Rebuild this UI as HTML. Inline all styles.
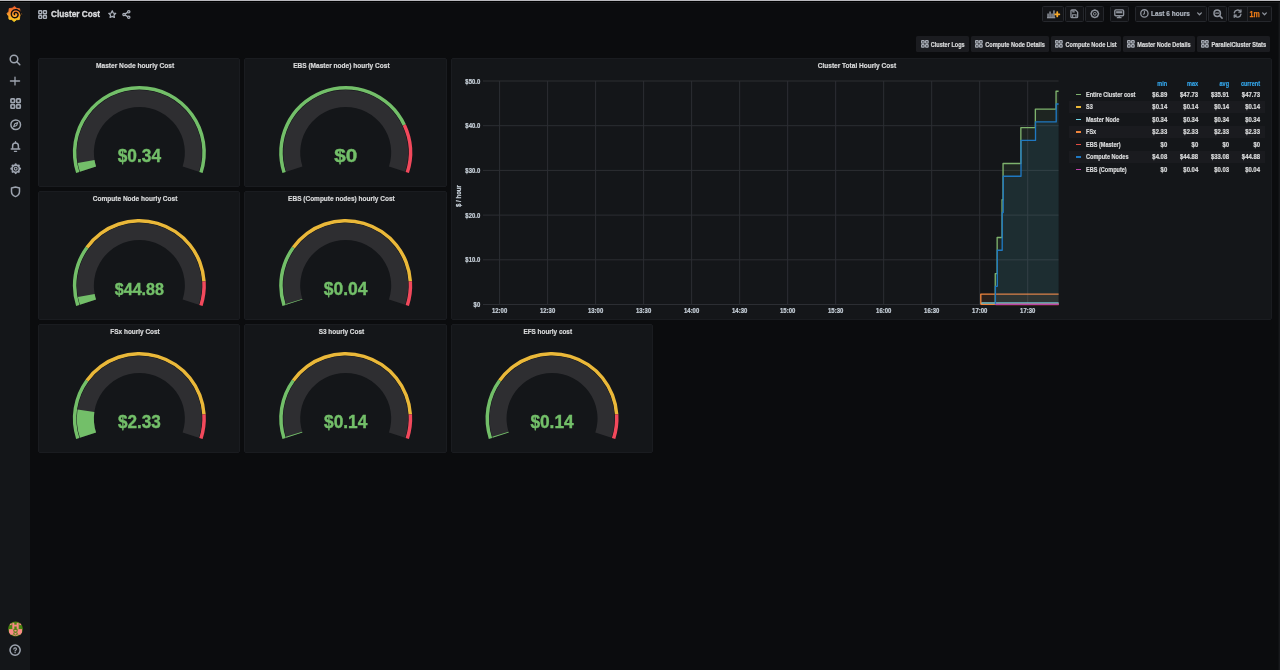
<!DOCTYPE html>
<html lang="en"><head><meta charset="utf-8"><title>Cluster Cost - Grafana</title>
<style>
html,body{margin:0;padding:0;}
body{width:1280px;height:670px;overflow:hidden;background:#0b0c0e;position:relative;font-family:"Liberation Sans",sans-serif;font-weight:700;color:#d8d9da;}
.t{position:absolute;white-space:nowrap;}
.abs{position:absolute;}
.panel{position:absolute;background:#141619;border:1px solid #1a1c20;border-radius:2px;box-sizing:border-box;}
.btn{position:absolute;background:#121316;border:1px solid #25272c;border-radius:1.5px;box-sizing:border-box;}
.lnk{position:absolute;background:#1b1c20;border-radius:1.5px;box-sizing:border-box;}
svg{position:absolute;overflow:visible;}
#root{position:absolute;left:0;top:0;width:1280px;height:670px;will-change:transform;}
</style></head><body><div id="root">

<div class="abs" style="left:0;top:0;width:1280px;height:1px;background:#b9b9bd"></div>
<div class="abs" style="left:0;top:1px;width:1280px;height:1px;background:#000"></div>
<div class="abs" style="left:0;top:2px;width:30px;height:668px;background:#141619"></div>
<div class="abs" style="left:0;top:2px;width:1280px;height:1px;background:rgba(255,255,255,0.045)"></div>
<svg style="left:0;top:0" width="1280" height="670"><rect x="1278.600" y="2" width="1.400" height="668" fill="#18191c"/></svg>
<svg style="left:0;top:0" width="30" height="30"><defs><linearGradient id="lg" gradientUnits="userSpaceOnUse" x1="0" y1="21.5" x2="0" y2="6"><stop offset="0" stop-color="#fcd21f"/><stop offset="0.45" stop-color="#f89a2c"/><stop offset="1" stop-color="#f1592a"/></linearGradient></defs><path d="M14.52 6.45L16.75 8.39L19.63 8.82L19.88 11.82L21.62 14.23L19.74 16.52L19.32 19.50L16.42 19.75L14.08 21.55L11.85 19.61L8.97 19.18L8.72 16.18L6.98 13.77L8.86 11.48L9.28 8.50L12.18 8.25Z" fill="url(#lg)" stroke="url(#lg)" stroke-width="0.9" stroke-linejoin="round"/><path d="M21.26 15.71L21.00 14.40L20.70 13.21L20.17 12.14L19.45 11.24L18.58 10.53L17.62 10.04L16.60 9.78L15.59 9.74L14.63 9.88L13.73 10.20L12.95 10.68L12.30 11.29L11.82 12.01L11.50 12.80L11.36 13.61L11.40 14.40L11.53 15.16L11.82 15.86L12.24 16.48L12.77 16.99L13.38 17.37L14.06 17.61L14.75 17.71L15.44 17.66L16.10 17.48L16.70 17.17L17.21 16.75L17.62 16.23L17.91 15.65L18.07 15.03L18.10 14.40L17.89 13.81L17.57 13.30L17.17 12.90L16.71 12.61L16.23 12.44L15.76 12.38L15.31 12.44L14.91 12.60L14.59 12.85L14.37 13.14L14.24 13.45L14.21 13.75L14.25 14.02L14.37 14.24L14.53 14.40" fill="none" stroke="#0c0d10" stroke-width="1.4" stroke-linecap="round" stroke-linejoin="round"/></svg>
<svg style="left:9.4px;top:54px" width="11.6" height="11.6" viewBox="0 0 23.2 23.2"><circle cx="10" cy="10" r="7.6" fill="none" stroke="#9da4af" stroke-width="3"/><path d="M15.600 15.600l6 6" stroke="#9da4af" stroke-width="3" stroke-linecap="round"/></svg>
<svg style="left:10.3px;top:76px" width="10" height="10" viewBox="0 0 20 20"><path d="M10 2.200v15.600" stroke="#9da4af" stroke-width="2.600" stroke-linecap="round"/><path d="M1 9.900h18" stroke="#9da4af" stroke-width="3" stroke-linecap="round"/></svg>
<svg style="left:9.9px;top:97.8px" width="11.2" height="11.2" viewBox="0 0 20 20"><g fill="none" stroke="#9da4af" stroke-width="3.0"><rect x="1.700" y="1.700" width="6.400" height="6.400" rx="1.200"/><rect x="11.900" y="1.700" width="6.400" height="6.400" rx="1.200"/><rect x="1.700" y="11.900" width="6.400" height="6.400" rx="1.200"/><rect x="11.900" y="11.900" width="6.400" height="6.400" rx="1.200"/></g></svg>
<svg style="left:9.8px;top:119.4px" width="11.4" height="11.4" viewBox="0 0 22 22"><circle cx="11" cy="11" r="9.300" fill="none" stroke="#9da4af" stroke-width="2.900"/><path d="M15 7l-2.300 5.700L7 15l2.300-5.700z" fill="none" stroke="#9da4af" stroke-width="2.200" stroke-linejoin="round"/></svg>
<svg style="left:10.2px;top:141px" width="11" height="11.6" viewBox="0 0 22 23.2"><path d="M5.200 15.500V10a5.800 5.800 0 0 1 11.600 0v5.500" fill="none" stroke="#9da4af" stroke-width="3" stroke-linejoin="round"/><path d="M2.500 16.200h17" stroke="#9da4af" stroke-width="3" stroke-linecap="round"/><path d="M8.800 20.600h4.400" stroke="#9da4af" stroke-width="2.600" stroke-linecap="round"/><path d="M11 1.500v2" stroke="#9da4af" stroke-width="2.600" stroke-linecap="round"/></svg>
<svg style="left:9.8px;top:163.1px" width="11.4" height="11.4" viewBox="0 0 22 22"><circle cx="11" cy="11" r="7" fill="none" stroke="#9da4af" stroke-width="3.200"/><circle cx="11" cy="2.600" r="2.100" fill="#9da4af" transform="rotate(0 11 11)"/><circle cx="11" cy="2.600" r="2.100" fill="#9da4af" transform="rotate(45 11 11)"/><circle cx="11" cy="2.600" r="2.100" fill="#9da4af" transform="rotate(90 11 11)"/><circle cx="11" cy="2.600" r="2.100" fill="#9da4af" transform="rotate(135 11 11)"/><circle cx="11" cy="2.600" r="2.100" fill="#9da4af" transform="rotate(180 11 11)"/><circle cx="11" cy="2.600" r="2.100" fill="#9da4af" transform="rotate(225 11 11)"/><circle cx="11" cy="2.600" r="2.100" fill="#9da4af" transform="rotate(270 11 11)"/><circle cx="11" cy="2.600" r="2.100" fill="#9da4af" transform="rotate(315 11 11)"/><circle cx="11" cy="11" r="2.700" fill="none" stroke="#9da4af" stroke-width="2.200"/></svg>
<svg style="left:10.1px;top:185.8px" width="11" height="11.6" viewBox="0 0 22 23.2"><path d="M11 2.200l8 2v6.800c0 4.800-3.200 8.400-8 10.200-4.800-1.800-8-5.400-8-10.200V4.200z" fill="none" stroke="#9da4af" stroke-width="3" stroke-linejoin="round"/></svg>
<svg style="left:0;top:0" width="30" height="670"><defs><clipPath id="avc"><circle cx="15.500" cy="629" r="7.400"/></clipPath></defs><g clip-path="url(#avc)"><rect x="7" y="620" width="17" height="18" fill="#4a8410"/><rect x="12.3" y="622.8" width="2.00" height="6.10" fill="#f98b86"/><rect x="16.7" y="622.8" width="2.00" height="6.10" fill="#f98b86"/><rect x="14.1" y="624.7" width="2.80" height="1.80" fill="#f98b86"/><rect x="9.4" y="623.2" width="2.20" height="1.90" fill="#f98b86"/><rect x="19.4" y="623.2" width="2.20" height="1.90" fill="#f98b86"/><rect x="9.0" y="629.1" width="4.50" height="5.70" fill="#f98b86"/><rect x="17.5" y="629.1" width="4.50" height="5.70" fill="#f98b86"/><rect x="13.5" y="629.8" width="4.00" height="6.20" fill="#f98b86"/><ellipse cx="15.500" cy="630.700" rx="1.700" ry="1.300" fill="none" stroke="#4a8410" stroke-width="0.900"/><ellipse cx="15.500" cy="633.800" rx="1.700" ry="1.300" fill="none" stroke="#4a8410" stroke-width="0.900"/></g></svg>
<svg style="left:9.4px;top:644.2px" width="12.2" height="12.2" viewBox="0 0 24 24"><circle cx="12" cy="12" r="10" fill="none" stroke="#9da4af" stroke-width="3"/><path d="M9.600 10a2.500 2.500 0 1 1 3.600 2.200c-.8.400-1.200.9-1.200 1.600" fill="none" stroke="#9da4af" stroke-width="2.400" stroke-linecap="round"/><circle cx="12" cy="16.800" r="1.400" fill="#9da4af"/></svg>
<svg style="left:37.9px;top:9.9px" width="9.2" height="9.2" viewBox="0 0 20 20"><g fill="none" stroke="#aab0ba" stroke-width="3.0"><rect x="1.700" y="1.700" width="6.400" height="6.400" rx="1.200"/><rect x="11.900" y="1.700" width="6.400" height="6.400" rx="1.200"/><rect x="1.700" y="11.900" width="6.400" height="6.400" rx="1.200"/><rect x="11.900" y="11.900" width="6.400" height="6.400" rx="1.200"/></g></svg>
<svg style="left:107.5px;top:10px" width="8.5" height="8.5" viewBox="0 0 20 20"><path d="M10 1.800l2.500 5.300 5.700.8-4.100 4 1 5.700-5.100-2.700-5.100 2.700 1-5.700-4.100-4 5.700-.8z" fill="none" stroke="#aab0ba" stroke-width="2.900" stroke-linejoin="round"/></svg>
<svg style="left:122px;top:10px" width="9" height="9" viewBox="0 0 20 20"><g fill="none" stroke="#aab0ba" stroke-width="2.800"><circle cx="15" cy="4" r="2.600"/><circle cx="15" cy="16" r="2.600"/><circle cx="4.500" cy="10" r="2.600"/><path d="M6.800 8.700l5.900-3.400M6.800 11.300l5.900 3.400"/></g></svg>
<div class="btn" style="left:1042.4px;top:6px;width:21.50px;height:16px"></div>
<div class="btn" style="left:1065.4px;top:6px;width:18.50px;height:16px"></div>
<div class="btn" style="left:1085.3px;top:6px;width:18.60px;height:16px"></div>
<div class="btn" style="left:1110.2px;top:6px;width:18.50px;height:16px"></div>
<div class="btn" style="left:1135.3px;top:6px;width:71.50px;height:16px"></div>
<div class="btn" style="left:1208.3px;top:6px;width:18.40px;height:16px"></div>
<div class="btn" style="left:1228.2px;top:6px;width:43.60px;height:16px"></div>
<div class="abs" style="left:1246.600px;top:6px;width:1px;height:16px;background:#25272c"></div>
<svg style="left:1046.8px;top:9.8px" width="13" height="9" viewBox="0 0 26 18"><g fill="#8e939c"><rect x="0.600" y="7" width="3" height="9"/><rect x="4.600" y="3" width="3" height="13"/><rect x="8.600" y="7" width="3" height="9"/><rect x="12.400" y="0.800" width="3" height="15.200"/><rect x="0" y="14.200" width="16.500" height="2.400"/></g><path d="M20.500 4.500v8.400M16.300 8.700h8.400" stroke="#f7a82a" stroke-width="3.600" stroke-linecap="round"/></svg>
<svg style="left:1070.4px;top:9.3px" width="8.6" height="9.6" viewBox="0 0 18 20"><path d="M4 2h7.500L16 6.500V16a2 2 0 0 1-2 2H4a2 2 0 0 1-2-2V4a2 2 0 0 1 2-2z" fill="none" stroke="#8e939c" stroke-width="2.800" stroke-linejoin="round"/><path d="M5.500 18v-6h7v6" fill="none" stroke="#8e939c" stroke-width="2.400"/><path d="M6 2.500v3.500h4" fill="none" stroke="#8e939c" stroke-width="2.200"/></svg>
<svg style="left:1089.7px;top:9.3px" width="9.6" height="9.6" viewBox="0 0 20 20"><path d="M17.90 10.00L15.59 15.59L10.00 17.90L4.41 15.59L2.10 10.00L4.41 4.41L10.00 2.10L15.59 4.41Z" fill="none" stroke="#8e939c" stroke-width="3.200" stroke-linejoin="round"/><circle cx="10" cy="10" r="2.900" fill="none" stroke="#8e939c" stroke-width="2"/></svg>
<svg style="left:1114.3px;top:9.3px" width="10.4" height="9.6" viewBox="0 0 22 20"><rect x="1.700" y="1.700" width="18.600" height="12.600" rx="2.200" fill="none" stroke="#8e939c" stroke-width="3"/><rect x="4.500" y="4.500" width="13" height="4.500" fill="#8e939c"/><path d="M7 18.300h8M11 15v3" stroke="#8e939c" stroke-width="2.600" stroke-linecap="round"/></svg>
<svg style="left:1139.6px;top:9.4px" width="8.8" height="8.8" viewBox="0 0 20 20"><circle cx="10" cy="10" r="8.300" fill="none" stroke="#8e939c" stroke-width="3"/><path d="M10 5v5.500l-2.500 1.500" fill="none" stroke="#8e939c" stroke-width="2.400" stroke-linecap="round"/></svg>
<svg style="left:1197px;top:11.6px" width="5" height="4" viewBox="0 0 10 8"><path d="M1.300 1.800l3.700 3.800 3.700-3.800" fill="none" stroke="#8e939c" stroke-width="2.500" stroke-linecap="round" stroke-linejoin="round"/></svg>
<svg style="left:1212.6px;top:9.0px" width="9.8" height="9.8" viewBox="0 0 20 20"><circle cx="8.600" cy="8.600" r="6.600" fill="none" stroke="#8e939c" stroke-width="3"/><path d="M13.800 13.800l4.800 4.800" stroke="#8e939c" stroke-width="3" stroke-linecap="round"/><path d="M5.600 8.600h6" stroke="#8e939c" stroke-width="2.600" stroke-linecap="round"/></svg>
<svg style="left:1233px;top:9.2px" width="9.2" height="9.2" viewBox="0 0 20 20"><path d="M2.800 8.500A7.400 7.400 0 0 1 16.500 6M17.200 11.500A7.400 7.400 0 0 1 3.500 14" fill="none" stroke="#8e939c" stroke-width="3" stroke-linecap="round"/><path d="M17.300 2v4.700h-4.700M2.700 18v-4.700h4.700" fill="none" stroke="#8e939c" stroke-width="2.800" stroke-linecap="round" stroke-linejoin="round"/></svg>
<svg style="left:1262.2px;top:11.6px" width="5" height="4" viewBox="0 0 10 8"><path d="M1.300 1.800l3.700 3.800 3.700-3.800" fill="none" stroke="#8e939c" stroke-width="2.500" stroke-linecap="round" stroke-linejoin="round"/></svg>
<div class="lnk" style="left:916.2px;top:36px;width:52.40px;height:16px"></div>
<svg style="left:920.5px;top:40.0px" width="7.8" height="7.8" viewBox="0 0 20 20"><g fill="none" stroke="#a9aeb7" stroke-width="3.2"><rect x="1.700" y="1.700" width="6.400" height="6.400" rx="1.200"/><rect x="11.900" y="1.700" width="6.400" height="6.400" rx="1.200"/><rect x="1.700" y="11.900" width="6.400" height="6.400" rx="1.200"/><rect x="11.900" y="11.900" width="6.400" height="6.400" rx="1.200"/></g></svg>
<div class="lnk" style="left:970.6px;top:36px;width:78.20px;height:16px"></div>
<svg style="left:974.9px;top:40.0px" width="7.8" height="7.8" viewBox="0 0 20 20"><g fill="none" stroke="#a9aeb7" stroke-width="3.2"><rect x="1.700" y="1.700" width="6.400" height="6.400" rx="1.200"/><rect x="11.900" y="1.700" width="6.400" height="6.400" rx="1.200"/><rect x="1.700" y="11.900" width="6.400" height="6.400" rx="1.200"/><rect x="11.900" y="11.900" width="6.400" height="6.400" rx="1.200"/></g></svg>
<div class="lnk" style="left:1051px;top:36px;width:69.70px;height:16px"></div>
<svg style="left:1055.3px;top:40.0px" width="7.8" height="7.8" viewBox="0 0 20 20"><g fill="none" stroke="#a9aeb7" stroke-width="3.2"><rect x="1.700" y="1.700" width="6.400" height="6.400" rx="1.200"/><rect x="11.900" y="1.700" width="6.400" height="6.400" rx="1.200"/><rect x="1.700" y="11.900" width="6.400" height="6.400" rx="1.200"/><rect x="11.900" y="11.900" width="6.400" height="6.400" rx="1.200"/></g></svg>
<div class="lnk" style="left:1122.7px;top:36px;width:71.90px;height:16px"></div>
<svg style="left:1127.0px;top:40.0px" width="7.8" height="7.8" viewBox="0 0 20 20"><g fill="none" stroke="#a9aeb7" stroke-width="3.2"><rect x="1.700" y="1.700" width="6.400" height="6.400" rx="1.200"/><rect x="11.900" y="1.700" width="6.400" height="6.400" rx="1.200"/><rect x="1.700" y="11.900" width="6.400" height="6.400" rx="1.200"/><rect x="11.900" y="11.900" width="6.400" height="6.400" rx="1.200"/></g></svg>
<div class="lnk" style="left:1196.9px;top:36px;width:73.10px;height:16px"></div>
<svg style="left:1201.2px;top:40.0px" width="7.8" height="7.8" viewBox="0 0 20 20"><g fill="none" stroke="#a9aeb7" stroke-width="3.2"><rect x="1.700" y="1.700" width="6.400" height="6.400" rx="1.200"/><rect x="11.900" y="1.700" width="6.400" height="6.400" rx="1.200"/><rect x="1.700" y="11.900" width="6.400" height="6.400" rx="1.200"/><rect x="11.900" y="11.900" width="6.400" height="6.400" rx="1.200"/></g></svg>
<div class="panel" style="left:38.00px;top:58px;width:202.33px;height:129px"></div>
<svg style="left:0;top:0" width="1280" height="670"><path d="M76.12 173.05A66.50 66.50 0 1 1 202.61 173.05L199.28 171.97A63.00 63.00 0 1 0 79.45 171.97Z" fill="#73bf69"/><path d="M79.93 171.81A62.50 62.50 0 1 1 198.81 171.81L182.64 166.56A45.50 45.50 0 1 0 96.09 166.56Z" fill="#2e2e31"/><path d="M79.93 171.81A62.50 62.50 0 0 1 77.74 162.90L94.50 160.07A45.50 45.50 0 0 0 96.09 166.56Z" fill="#73bf69"/></svg>
<div class="panel" style="left:244.33px;top:58px;width:202.33px;height:129px"></div>
<svg style="left:0;top:0" width="1280" height="670"><path d="M282.45 173.05A66.50 66.50 0 0 1 405.87 124.19L402.70 125.68A63.00 63.00 0 0 0 285.78 171.97Z" fill="#73bf69"/><path d="M405.87 124.19A66.50 66.50 0 0 1 408.95 173.05L405.62 171.97A63.00 63.00 0 0 0 402.70 125.68Z" fill="#f2495c"/><path d="M286.26 171.81A62.50 62.50 0 1 1 405.14 171.81L388.97 166.56A45.50 45.50 0 1 0 302.43 166.56Z" fill="#2e2e31"/></svg>
<div class="panel" style="left:38.00px;top:191px;width:202.33px;height:129px"></div>
<svg style="left:0;top:0" width="1280" height="670"><path d="M76.12 306.05A66.50 66.50 0 0 1 85.57 246.41L88.40 248.47A63.00 63.00 0 0 0 79.45 304.97Z" fill="#73bf69"/><path d="M85.57 246.41A66.50 66.50 0 0 1 205.74 281.32L202.24 281.54A63.00 63.00 0 0 0 88.40 248.47Z" fill="#eab839"/><path d="M205.74 281.32A66.50 66.50 0 0 1 202.61 306.05L199.28 304.97A63.00 63.00 0 0 0 202.24 281.54Z" fill="#f2495c"/><path d="M79.93 304.81A62.50 62.50 0 1 1 198.81 304.81L182.64 299.56A45.50 45.50 0 1 0 96.09 299.56Z" fill="#2e2e31"/><path d="M79.93 304.81A62.50 62.50 0 0 1 77.94 297.06L94.65 293.91A45.50 45.50 0 0 0 96.09 299.56Z" fill="#73bf69"/></svg>
<div class="panel" style="left:244.33px;top:191px;width:202.33px;height:129px"></div>
<svg style="left:0;top:0" width="1280" height="670"><path d="M282.45 306.05A66.50 66.50 0 0 1 291.90 246.41L294.73 248.47A63.00 63.00 0 0 0 285.78 304.97Z" fill="#73bf69"/><path d="M291.90 246.41A66.50 66.50 0 0 1 412.07 281.32L408.58 281.54A63.00 63.00 0 0 0 294.73 248.47Z" fill="#eab839"/><path d="M412.07 281.32A66.50 66.50 0 0 1 408.95 306.05L405.62 304.97A63.00 63.00 0 0 0 408.58 281.54Z" fill="#f2495c"/><path d="M286.26 304.81A62.50 62.50 0 1 1 405.14 304.81L388.97 299.56A45.50 45.50 0 1 0 302.43 299.56Z" fill="#2e2e31"/><path d="M286.26 304.81A62.50 62.50 0 0 1 285.97 303.92L302.22 298.91A45.50 45.50 0 0 0 302.43 299.56Z" fill="#73bf69"/></svg>
<div class="panel" style="left:38.00px;top:324px;width:202.33px;height:129px"></div>
<svg style="left:0;top:0" width="1280" height="670"><path d="M76.12 439.05A66.50 66.50 0 0 1 85.57 379.41L88.40 381.47A63.00 63.00 0 0 0 79.45 437.97Z" fill="#73bf69"/><path d="M85.57 379.41A66.50 66.50 0 0 1 205.74 414.32L202.24 414.54A63.00 63.00 0 0 0 88.40 381.47Z" fill="#eab839"/><path d="M205.74 414.32A66.50 66.50 0 0 1 202.61 439.05L199.28 437.97A63.00 63.00 0 0 0 202.24 414.54Z" fill="#f2495c"/><path d="M79.93 437.81A62.50 62.50 0 1 1 198.81 437.81L182.64 432.56A45.50 45.50 0 1 0 96.09 432.56Z" fill="#2e2e31"/><path d="M79.93 437.81A62.50 62.50 0 0 1 77.53 409.42L94.35 411.89A45.50 45.50 0 0 0 96.09 432.56Z" fill="#73bf69"/></svg>
<div class="panel" style="left:244.33px;top:324px;width:202.33px;height:129px"></div>
<svg style="left:0;top:0" width="1280" height="670"><path d="M282.45 439.05A66.50 66.50 0 0 1 291.90 379.41L294.73 381.47A63.00 63.00 0 0 0 285.78 437.97Z" fill="#73bf69"/><path d="M291.90 379.41A66.50 66.50 0 0 1 412.07 414.32L408.58 414.54A63.00 63.00 0 0 0 294.73 381.47Z" fill="#eab839"/><path d="M412.07 414.32A66.50 66.50 0 0 1 408.95 439.05L405.62 437.97A63.00 63.00 0 0 0 408.58 414.54Z" fill="#f2495c"/><path d="M286.26 437.81A62.50 62.50 0 1 1 405.14 437.81L388.97 432.56A45.50 45.50 0 1 0 302.43 432.56Z" fill="#2e2e31"/><path d="M286.26 437.81A62.50 62.50 0 0 1 285.91 436.69L302.17 431.74A45.50 45.50 0 0 0 302.43 432.56Z" fill="#73bf69"/></svg>
<div class="panel" style="left:450.67px;top:324px;width:202.33px;height:129px"></div>
<svg style="left:0;top:0" width="1280" height="670"><path d="M488.79 439.05A66.50 66.50 0 0 1 498.23 379.41L501.07 381.47A63.00 63.00 0 0 0 492.12 437.97Z" fill="#73bf69"/><path d="M498.23 379.41A66.50 66.50 0 0 1 618.40 414.32L614.91 414.54A63.00 63.00 0 0 0 501.07 381.47Z" fill="#eab839"/><path d="M618.40 414.32A66.50 66.50 0 0 1 615.28 439.05L611.95 437.97A63.00 63.00 0 0 0 614.91 414.54Z" fill="#f2495c"/><path d="M492.59 437.81A62.50 62.50 0 1 1 611.47 437.81L595.31 432.56A45.50 45.50 0 1 0 508.76 432.56Z" fill="#2e2e31"/><path d="M492.59 437.81A62.50 62.50 0 0 1 492.24 436.69L508.50 431.74A45.50 45.50 0 0 0 508.76 432.56Z" fill="#73bf69"/></svg>
<div class="panel" style="left:450.67px;top:58px;width:821.33px;height:262px"></div>
<svg style="left:0;top:0" width="1280" height="670"><path d="M483 304.50H1058.6" stroke="#2c2e33" stroke-width="1"/><path d="M483 259.80H1058.6" stroke="#2c2e33" stroke-width="1"/><path d="M483 215.10H1058.6" stroke="#2c2e33" stroke-width="1"/><path d="M483 170.40H1058.6" stroke="#2c2e33" stroke-width="1"/><path d="M483 125.70H1058.6" stroke="#2c2e33" stroke-width="1"/><path d="M483 81.00H1058.6" stroke="#2c2e33" stroke-width="1"/><path d="M499.60 81V305.0" stroke="#2c2e33" stroke-width="1"/><path d="M547.61 81V305.0" stroke="#2c2e33" stroke-width="1"/><path d="M595.62 81V305.0" stroke="#2c2e33" stroke-width="1"/><path d="M643.63 81V305.0" stroke="#2c2e33" stroke-width="1"/><path d="M691.64 81V305.0" stroke="#2c2e33" stroke-width="1"/><path d="M739.65 81V305.0" stroke="#2c2e33" stroke-width="1"/><path d="M787.66 81V305.0" stroke="#2c2e33" stroke-width="1"/><path d="M835.67 81V305.0" stroke="#2c2e33" stroke-width="1"/><path d="M883.68 81V305.0" stroke="#2c2e33" stroke-width="1"/><path d="M931.69 81V305.0" stroke="#2c2e33" stroke-width="1"/><path d="M979.70 81V305.0" stroke="#2c2e33" stroke-width="1"/><path d="M1027.71 81V305.0" stroke="#2c2e33" stroke-width="1"/><path d="M995.25 304.5V273.55H997.15V237.45H1002.0500000000001V199.75H1003.0500000000001V163.45H1020.85V127.65H1035.35V109.15H1056.05V91.25H1058.6V304.5Z" fill="#7eb26d" fill-opacity="0.1"/><path d="M995.25 304.5V273.55H997.15V237.45H1002.0500000000001V199.75H1003.0500000000001V163.45H1020.85V127.65H1035.35V109.15H1056.05V91.25H1058.6" fill="none" stroke="#7eb26d" stroke-width="1.35" stroke-linejoin="round"/><path d="M995.5 304.5V303.87H1058.6V304.5Z" fill="#eab839" fill-opacity="0.1"/><path d="M995.5 304.5V303.87H1058.6" fill="none" stroke="#eab839" stroke-width="1.35" stroke-linejoin="round"/><path d="M981.6 304.5V302.98H1058.6V304.5Z" fill="#6ed0e0" fill-opacity="0.1"/><path d="M981.6 304.5V302.98H1058.6" fill="none" stroke="#6ed0e0" stroke-width="1.35" stroke-linejoin="round"/><path d="M980.8 304.5V294.08H1058.6V304.5Z" fill="#ef843c" fill-opacity="0.1"/><path d="M980.8 304.5V294.08H1058.6" fill="none" stroke="#ef843c" stroke-width="1.35" stroke-linejoin="round"/><path d="M980.8 304.5H995.5" stroke="#ef843c" stroke-width="1.1"/><path d="M995.5 304.5V304.50H1058.6V304.5Z" fill="#e24d42" fill-opacity="0.1"/><path d="M995.5 304.5V304.50H1058.6" fill="none" stroke="#e24d42" stroke-width="1.35" stroke-linejoin="round"/><path d="M995.4 304.5V286.30H997.3V250.20H1002.2V212.50H1003.2V176.20H1021V140.40H1035.5V121.90H1056.2V104.00H1058.6V304.5Z" fill="#1f78c1" fill-opacity="0.1"/><path d="M995.4 304.5V286.30H997.3V250.20H1002.2V212.50H1003.2V176.20H1021V140.40H1035.5V121.90H1056.2V104.00H1058.6" fill="none" stroke="#1f78c1" stroke-width="1.35" stroke-linejoin="round"/><path d="M995.5 304.5V304.32H1058.6V304.5Z" fill="#ba43a9" fill-opacity="0.1"/><path d="M995.5 304.5V304.32H1058.6" fill="none" stroke="#ba43a9" stroke-width="1.35" stroke-linejoin="round"/></svg>
<div class="abs" style="left:1075.600px;top:93.80px;width:5.800px;height:1.400px;background:#7eb26d"></div>
<div class="abs" style="left:1069px;top:100.75px;width:196px;height:12.500px;background:#1a1b1f"></div>
<div class="abs" style="left:1075.600px;top:106.30px;width:5.800px;height:1.400px;background:#eab839"></div>
<div class="abs" style="left:1075.600px;top:118.80px;width:5.800px;height:1.400px;background:#6ed0e0"></div>
<div class="abs" style="left:1069px;top:125.75px;width:196px;height:12.500px;background:#1a1b1f"></div>
<div class="abs" style="left:1075.600px;top:131.30px;width:5.800px;height:1.400px;background:#ef843c"></div>
<div class="abs" style="left:1075.600px;top:143.80px;width:5.800px;height:1.400px;background:#e24d42"></div>
<div class="abs" style="left:1069px;top:150.75px;width:196px;height:12.500px;background:#1a1b1f"></div>
<div class="abs" style="left:1075.600px;top:156.30px;width:5.800px;height:1.400px;background:#1f78c1"></div>
<div class="abs" style="left:1075.600px;top:168.80px;width:5.800px;height:1.400px;background:#ba43a9"></div>
<svg style="left:0;top:0" width="1280" height="670" font-family="Liberation Sans, sans-serif" font-weight="700"><text x="51.10" y="17.22" font-size="9.84" fill="#dcdddf" textLength="49.00" lengthAdjust="spacingAndGlyphs" stroke="#dcdddf" stroke-width="0.35">Cluster Cost</text><text x="1151.10" y="16.48" font-size="7.49" fill="#aeb5bf" textLength="38.70" lengthAdjust="spacingAndGlyphs" stroke="#aeb5bf" stroke-width="0.22">Last 6 hours</text><text x="1249.60" y="17.04" font-size="8.77" fill="#eb7b18" textLength="10.20" lengthAdjust="spacingAndGlyphs" stroke="#eb7b18" stroke-width="0.25">1m</text><text x="930.80" y="46.70" font-size="6.42" fill="#d8d9da" textLength="33.80" lengthAdjust="spacingAndGlyphs" stroke="#d8d9da" stroke-width="0.22">Cluster Logs</text><text x="985.20" y="46.70" font-size="6.42" fill="#d8d9da" textLength="59.60" lengthAdjust="spacingAndGlyphs" stroke="#d8d9da" stroke-width="0.22">Compute Node Details</text><text x="1065.60" y="46.70" font-size="6.42" fill="#d8d9da" textLength="51.10" lengthAdjust="spacingAndGlyphs" stroke="#d8d9da" stroke-width="0.22">Compute Node List</text><text x="1137.30" y="46.70" font-size="6.42" fill="#d8d9da" textLength="53.30" lengthAdjust="spacingAndGlyphs" stroke="#d8d9da" stroke-width="0.22">Master Node Details</text><text x="1211.50" y="46.70" font-size="6.42" fill="#d8d9da" textLength="54.50" lengthAdjust="spacingAndGlyphs" stroke="#d8d9da" stroke-width="0.22">ParallelCluster Stats</text><text x="95.97" y="68.28" font-size="7.49" fill="#d8d9da" textLength="78.20" lengthAdjust="spacingAndGlyphs" stroke="#d8d9da" stroke-width="0.22">Master Node hourly Cost</text><text x="117.72" y="162.29" font-size="18.4" fill="#73bf69" textLength="43.30" lengthAdjust="spacingAndGlyphs" stroke="#73bf69" stroke-width="0.4">$0.34</text><text x="293.15" y="68.28" font-size="7.49" fill="#d8d9da" textLength="96.50" lengthAdjust="spacingAndGlyphs" stroke="#d8d9da" stroke-width="0.22">EBS (Master node) hourly Cost</text><text x="334.20" y="162.29" font-size="18.4" fill="#73bf69" textLength="23.00" lengthAdjust="spacingAndGlyphs" stroke="#73bf69" stroke-width="0.4">$0</text><text x="92.77" y="201.28" font-size="7.49" fill="#d8d9da" textLength="84.60" lengthAdjust="spacingAndGlyphs" stroke="#d8d9da" stroke-width="0.22">Compute Node hourly Cost</text><text x="114.77" y="294.90" font-size="17.33" fill="#73bf69" textLength="49.20" lengthAdjust="spacingAndGlyphs" stroke="#73bf69" stroke-width="0.4">$44.88</text><text x="288.10" y="201.28" font-size="7.49" fill="#d8d9da" textLength="106.60" lengthAdjust="spacingAndGlyphs" stroke="#d8d9da" stroke-width="0.22">EBS (Compute nodes) hourly Cost</text><text x="323.85" y="295.29" font-size="18.4" fill="#73bf69" textLength="43.70" lengthAdjust="spacingAndGlyphs" stroke="#73bf69" stroke-width="0.4">$0.04</text><text x="110.37" y="334.28" font-size="7.49" fill="#d8d9da" textLength="49.40" lengthAdjust="spacingAndGlyphs" stroke="#d8d9da" stroke-width="0.22">FSx hourly Cost</text><text x="117.92" y="428.29" font-size="18.4" fill="#73bf69" textLength="42.90" lengthAdjust="spacingAndGlyphs" stroke="#73bf69" stroke-width="0.4">$2.33</text><text x="318.65" y="334.28" font-size="7.49" fill="#d8d9da" textLength="45.50" lengthAdjust="spacingAndGlyphs" stroke="#d8d9da" stroke-width="0.22">S3 hourly Cost</text><text x="324.05" y="428.29" font-size="18.4" fill="#73bf69" textLength="43.30" lengthAdjust="spacingAndGlyphs" stroke="#73bf69" stroke-width="0.4">$0.14</text><text x="523.43" y="334.28" font-size="7.49" fill="#d8d9da" textLength="48.60" lengthAdjust="spacingAndGlyphs" stroke="#d8d9da" stroke-width="0.22">EFS hourly cost</text><text x="530.38" y="428.29" font-size="18.4" fill="#73bf69" textLength="43.30" lengthAdjust="spacingAndGlyphs" stroke="#73bf69" stroke-width="0.4">$0.14</text><text x="817.78" y="68.28" font-size="7.49" fill="#d8d9da" textLength="78.30" lengthAdjust="spacingAndGlyphs" stroke="#d8d9da" stroke-width="0.22">Cluster Total Hourly Cost</text><text x="473.59" y="307.00" font-size="6.42" fill="#c7d0d9" textLength="6.61" lengthAdjust="spacingAndGlyphs" stroke="#c7d0d9" stroke-width="0.22">$0</text><text x="465.34" y="262.30" font-size="6.42" fill="#c7d0d9" textLength="14.86" lengthAdjust="spacingAndGlyphs" stroke="#c7d0d9" stroke-width="0.22">$10.0</text><text x="465.34" y="217.60" font-size="6.42" fill="#c7d0d9" textLength="14.86" lengthAdjust="spacingAndGlyphs" stroke="#c7d0d9" stroke-width="0.22">$20.0</text><text x="465.34" y="172.90" font-size="6.42" fill="#c7d0d9" textLength="14.86" lengthAdjust="spacingAndGlyphs" stroke="#c7d0d9" stroke-width="0.22">$30.0</text><text x="465.34" y="128.20" font-size="6.42" fill="#c7d0d9" textLength="14.86" lengthAdjust="spacingAndGlyphs" stroke="#c7d0d9" stroke-width="0.22">$40.0</text><text x="465.34" y="83.50" font-size="6.42" fill="#c7d0d9" textLength="14.86" lengthAdjust="spacingAndGlyphs" stroke="#c7d0d9" stroke-width="0.22">$50.0</text><text x="492.00" y="313.20" font-size="6.42" fill="#c7d0d9" textLength="15.19" lengthAdjust="spacingAndGlyphs" stroke="#c7d0d9" stroke-width="0.22">12:00</text><text x="540.01" y="313.20" font-size="6.42" fill="#c7d0d9" textLength="15.19" lengthAdjust="spacingAndGlyphs" stroke="#c7d0d9" stroke-width="0.22">12:30</text><text x="588.02" y="313.20" font-size="6.42" fill="#c7d0d9" textLength="15.19" lengthAdjust="spacingAndGlyphs" stroke="#c7d0d9" stroke-width="0.22">13:00</text><text x="636.03" y="313.20" font-size="6.42" fill="#c7d0d9" textLength="15.19" lengthAdjust="spacingAndGlyphs" stroke="#c7d0d9" stroke-width="0.22">13:30</text><text x="684.04" y="313.20" font-size="6.42" fill="#c7d0d9" textLength="15.19" lengthAdjust="spacingAndGlyphs" stroke="#c7d0d9" stroke-width="0.22">14:00</text><text x="732.05" y="313.20" font-size="6.42" fill="#c7d0d9" textLength="15.19" lengthAdjust="spacingAndGlyphs" stroke="#c7d0d9" stroke-width="0.22">14:30</text><text x="780.06" y="313.20" font-size="6.42" fill="#c7d0d9" textLength="15.19" lengthAdjust="spacingAndGlyphs" stroke="#c7d0d9" stroke-width="0.22">15:00</text><text x="828.07" y="313.20" font-size="6.42" fill="#c7d0d9" textLength="15.19" lengthAdjust="spacingAndGlyphs" stroke="#c7d0d9" stroke-width="0.22">15:30</text><text x="876.08" y="313.20" font-size="6.42" fill="#c7d0d9" textLength="15.19" lengthAdjust="spacingAndGlyphs" stroke="#c7d0d9" stroke-width="0.22">16:00</text><text x="924.09" y="313.20" font-size="6.42" fill="#c7d0d9" textLength="15.19" lengthAdjust="spacingAndGlyphs" stroke="#c7d0d9" stroke-width="0.22">16:30</text><text x="972.10" y="313.20" font-size="6.42" fill="#c7d0d9" textLength="15.19" lengthAdjust="spacingAndGlyphs" stroke="#c7d0d9" stroke-width="0.22">17:00</text><text x="1020.11" y="313.20" font-size="6.42" fill="#c7d0d9" textLength="15.19" lengthAdjust="spacingAndGlyphs" stroke="#c7d0d9" stroke-width="0.22">17:30</text><text x="448.15" y="198.30" font-size="6.42" fill="#c7d0d9" textLength="21.90" lengthAdjust="spacingAndGlyphs" stroke="#c7d0d9" stroke-width="0.22" transform="rotate(-90 459.1 196)">$ / hour</text><text x="1157.33" y="85.90" font-size="6.42" fill="#33a2e5" textLength="9.87" lengthAdjust="spacingAndGlyphs" stroke="#33a2e5" stroke-width="0.22">min</text><text x="1187.09" y="85.90" font-size="6.42" fill="#33a2e5" textLength="11.11" lengthAdjust="spacingAndGlyphs" stroke="#33a2e5" stroke-width="0.22">max</text><text x="1219.54" y="85.90" font-size="6.42" fill="#33a2e5" textLength="9.56" lengthAdjust="spacingAndGlyphs" stroke="#33a2e5" stroke-width="0.22">avg</text><text x="1240.88" y="85.90" font-size="6.42" fill="#33a2e5" textLength="19.12" lengthAdjust="spacingAndGlyphs" stroke="#33a2e5" stroke-width="0.22">current</text><text x="1086.00" y="96.90" font-size="6.42" fill="#d8d9da" textLength="49.35" lengthAdjust="spacingAndGlyphs" stroke="#d8d9da" stroke-width="0.22">Entire Cluster cost</text><text x="1152.34" y="96.90" font-size="6.42" fill="#d8d9da" textLength="14.86" lengthAdjust="spacingAndGlyphs" stroke="#d8d9da" stroke-width="0.22">$6.89</text><text x="1180.03" y="96.90" font-size="6.42" fill="#d8d9da" textLength="18.17" lengthAdjust="spacingAndGlyphs" stroke="#d8d9da" stroke-width="0.22">$47.73</text><text x="1210.93" y="96.90" font-size="6.42" fill="#d8d9da" textLength="18.17" lengthAdjust="spacingAndGlyphs" stroke="#d8d9da" stroke-width="0.22">$35.91</text><text x="1241.83" y="96.90" font-size="6.42" fill="#d8d9da" textLength="18.17" lengthAdjust="spacingAndGlyphs" stroke="#d8d9da" stroke-width="0.22">$47.73</text><text x="1086.00" y="109.40" font-size="6.42" fill="#d8d9da" textLength="6.79" lengthAdjust="spacingAndGlyphs" stroke="#d8d9da" stroke-width="0.22">S3</text><text x="1152.34" y="109.40" font-size="6.42" fill="#d8d9da" textLength="14.86" lengthAdjust="spacingAndGlyphs" stroke="#d8d9da" stroke-width="0.22">$0.14</text><text x="1183.34" y="109.40" font-size="6.42" fill="#d8d9da" textLength="14.86" lengthAdjust="spacingAndGlyphs" stroke="#d8d9da" stroke-width="0.22">$0.14</text><text x="1214.24" y="109.40" font-size="6.42" fill="#d8d9da" textLength="14.86" lengthAdjust="spacingAndGlyphs" stroke="#d8d9da" stroke-width="0.22">$0.14</text><text x="1245.14" y="109.40" font-size="6.42" fill="#d8d9da" textLength="14.86" lengthAdjust="spacingAndGlyphs" stroke="#d8d9da" stroke-width="0.22">$0.14</text><text x="1086.00" y="121.90" font-size="6.42" fill="#d8d9da" textLength="33.31" lengthAdjust="spacingAndGlyphs" stroke="#d8d9da" stroke-width="0.22">Master Node</text><text x="1152.34" y="121.90" font-size="6.42" fill="#d8d9da" textLength="14.86" lengthAdjust="spacingAndGlyphs" stroke="#d8d9da" stroke-width="0.22">$0.34</text><text x="1183.34" y="121.90" font-size="6.42" fill="#d8d9da" textLength="14.86" lengthAdjust="spacingAndGlyphs" stroke="#d8d9da" stroke-width="0.22">$0.34</text><text x="1214.24" y="121.90" font-size="6.42" fill="#d8d9da" textLength="14.86" lengthAdjust="spacingAndGlyphs" stroke="#d8d9da" stroke-width="0.22">$0.34</text><text x="1245.14" y="121.90" font-size="6.42" fill="#d8d9da" textLength="14.86" lengthAdjust="spacingAndGlyphs" stroke="#d8d9da" stroke-width="0.22">$0.34</text><text x="1086.00" y="134.40" font-size="6.42" fill="#d8d9da" textLength="10.18" lengthAdjust="spacingAndGlyphs" stroke="#d8d9da" stroke-width="0.22">FSx</text><text x="1152.34" y="134.40" font-size="6.42" fill="#d8d9da" textLength="14.86" lengthAdjust="spacingAndGlyphs" stroke="#d8d9da" stroke-width="0.22">$2.33</text><text x="1183.34" y="134.40" font-size="6.42" fill="#d8d9da" textLength="14.86" lengthAdjust="spacingAndGlyphs" stroke="#d8d9da" stroke-width="0.22">$2.33</text><text x="1214.24" y="134.40" font-size="6.42" fill="#d8d9da" textLength="14.86" lengthAdjust="spacingAndGlyphs" stroke="#d8d9da" stroke-width="0.22">$2.33</text><text x="1245.14" y="134.40" font-size="6.42" fill="#d8d9da" textLength="14.86" lengthAdjust="spacingAndGlyphs" stroke="#d8d9da" stroke-width="0.22">$2.33</text><text x="1086.00" y="146.90" font-size="6.42" fill="#d8d9da" textLength="34.54" lengthAdjust="spacingAndGlyphs" stroke="#d8d9da" stroke-width="0.22">EBS (Master)</text><text x="1160.59" y="146.90" font-size="6.42" fill="#d8d9da" textLength="6.61" lengthAdjust="spacingAndGlyphs" stroke="#d8d9da" stroke-width="0.22">$0</text><text x="1191.59" y="146.90" font-size="6.42" fill="#d8d9da" textLength="6.61" lengthAdjust="spacingAndGlyphs" stroke="#d8d9da" stroke-width="0.22">$0</text><text x="1222.49" y="146.90" font-size="6.42" fill="#d8d9da" textLength="6.61" lengthAdjust="spacingAndGlyphs" stroke="#d8d9da" stroke-width="0.22">$0</text><text x="1253.39" y="146.90" font-size="6.42" fill="#d8d9da" textLength="6.61" lengthAdjust="spacingAndGlyphs" stroke="#d8d9da" stroke-width="0.22">$0</text><text x="1086.00" y="159.40" font-size="6.42" fill="#d8d9da" textLength="42.55" lengthAdjust="spacingAndGlyphs" stroke="#d8d9da" stroke-width="0.22">Compute Nodes</text><text x="1152.34" y="159.40" font-size="6.42" fill="#d8d9da" textLength="14.86" lengthAdjust="spacingAndGlyphs" stroke="#d8d9da" stroke-width="0.22">$4.08</text><text x="1180.03" y="159.40" font-size="6.42" fill="#d8d9da" textLength="18.17" lengthAdjust="spacingAndGlyphs" stroke="#d8d9da" stroke-width="0.22">$44.88</text><text x="1210.93" y="159.40" font-size="6.42" fill="#d8d9da" textLength="18.17" lengthAdjust="spacingAndGlyphs" stroke="#d8d9da" stroke-width="0.22">$33.08</text><text x="1241.83" y="159.40" font-size="6.42" fill="#d8d9da" textLength="18.17" lengthAdjust="spacingAndGlyphs" stroke="#d8d9da" stroke-width="0.22">$44.88</text><text x="1086.00" y="171.90" font-size="6.42" fill="#d8d9da" textLength="40.70" lengthAdjust="spacingAndGlyphs" stroke="#d8d9da" stroke-width="0.22">EBS (Compute)</text><text x="1160.59" y="171.90" font-size="6.42" fill="#d8d9da" textLength="6.61" lengthAdjust="spacingAndGlyphs" stroke="#d8d9da" stroke-width="0.22">$0</text><text x="1183.34" y="171.90" font-size="6.42" fill="#d8d9da" textLength="14.86" lengthAdjust="spacingAndGlyphs" stroke="#d8d9da" stroke-width="0.22">$0.04</text><text x="1214.24" y="171.90" font-size="6.42" fill="#d8d9da" textLength="14.86" lengthAdjust="spacingAndGlyphs" stroke="#d8d9da" stroke-width="0.22">$0.03</text><text x="1245.14" y="171.90" font-size="6.42" fill="#d8d9da" textLength="14.86" lengthAdjust="spacingAndGlyphs" stroke="#d8d9da" stroke-width="0.22">$0.04</text></svg>
</div></body></html>
